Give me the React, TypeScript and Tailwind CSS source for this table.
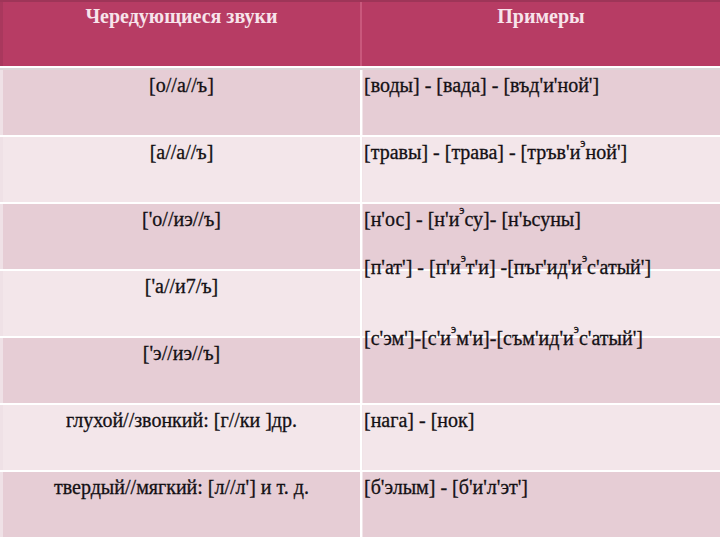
import React from 'react';

type Row = {
  left: React.ReactNode;
  right: React.ReactNode;
  tone: 'dark' | 'light';
  shift?: string;
};

const E = () => <sup className="text-[12px] leading-none align-[6px]">э</sup>;

const rows: Row[] = [
  { left: "[о//а//ъ]", right: "[воды] - [вада] - [въд'и'ной']", tone: 'dark' },
  {
    left: "[а//а//ъ]",
    right: (
      <>
        [травы] - [трава] - [тръв'и<E />ной']
      </>
    ),
    tone: 'light',
  },
  {
    left: "['о//иэ//ъ]",
    right: (
      <>
        [н'ос] - [н'и<E />су]- [н'ьсуны]
      </>
    ),
    tone: 'dark',
  },
  {
    left: "['а//и7/ъ]",
    right: (
      <>
        [п'ат'] - [п'и<E />т'и] -[пъг'ид'и<E />с'атый']
      </>
    ),
    tone: 'light',
    shift: '-mt-[19px]',
  },
  {
    left: "['э//иэ//ъ]",
    right: (
      <>
        [с'эм']-[с'и<E />м'и]-[съм'ид'и<E />с'атый']
      </>
    ),
    tone: 'dark',
    shift: '-mt-[15px]',
  },
  { left: "глухой//звонкий: [г//ки ]др.", right: "[нага] - [нок]", tone: 'light' },
  { left: "твердый//мягкий: [л//л'] и т. д.", right: "[б'элым] - [б'и'л'эт']", tone: 'dark' },
];

export default function App() {
  return (
    <div className="w-[720px] h-[540px] overflow-hidden bg-white text-[#141014] font-['Liberation_Serif','Times_New_Roman',serif]">
      {/* Header */}
      <div className="flex h-[66px] bg-[#b73c64] border-t-2 border-[#9e3558]">
        <div className="w-[360px] flex justify-center pt-[2px] text-[20px] leading-[24px] font-bold text-[#f7e4eb] border-l-[3px] border-[#a9385d]">
          Чередующиеся звуки
        </div>
        <div className="w-[2px] bg-[#c9587c]" />
        <div className="flex-1 flex justify-center pt-[2px] text-[20px] leading-[24px] font-bold text-[#f7e4eb]">
          Примеры
        </div>
      </div>
      <div className="h-[2px] bg-white" />
      <div className="h-[2px] bg-[#dcd6d8]" />

      {/* Body */}
      <div className="flex flex-col gap-[2px]">
        {rows.map((row, i) => (
          <div
            key={i}
            className={`flex h-[65px] text-[20px] leading-[24px] [-webkit-text-stroke:0.3px_#141014] ${
              row.tone === 'dark' ? 'bg-[#e6cdd5]' : 'bg-[#f3e6ea]'
            }`}
          >
            <div className="w-[360px] flex justify-center pt-[3px] border-l-[3px] border-[#efe1e6]">
              <span>{row.left}</span>
            </div>
            <div className="w-[2px] bg-white" />
            <div className="flex-1 pl-[1px] pt-[3px] border-l border-[#f1e4e8]">
              <div className={`whitespace-nowrap ${row.shift ?? ''}`}>{row.right}</div>
            </div>
          </div>
        ))}
      </div>
    </div>
  );
}
